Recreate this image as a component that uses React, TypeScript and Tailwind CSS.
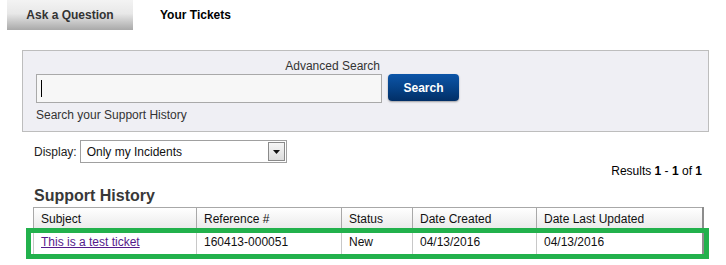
export default function App() {
  const cols = [
    { label: 'Subject', w: 'w-[163px]' },
    { label: 'Reference #', w: 'w-[145px]' },
    { label: 'Status', w: 'w-[71px]' },
    { label: 'Date Created', w: 'w-[124px]' },
    { label: 'Date Last Updated', w: 'w-[166px]' },
  ]

  return (
    <div className="relative w-[726px] h-[265px] overflow-hidden bg-white font-['Liberation_Sans',Arial,sans-serif] text-[12px] text-[#222]">
      {/* Tabs */}
      <div className="flex h-[30px] pl-[7px]">
        <div className="flex w-[126px] items-center justify-center bg-[linear-gradient(to_bottom,#f3f3f3_0%,#e8e8e8_45%,#a9a9a9_100%)] text-[12px] font-bold text-[#333]">
          Ask a Question
        </div>
        <div className="flex items-center pl-[27px] text-[12px] font-bold text-black">Your Tickets</div>
      </div>

      {/* Search panel */}
      <div className="ml-[22px] mt-[20px] h-[82px] w-[687px] border border-[#bdbdbd] bg-[#efeff4] pl-[13px] pt-[8px]">
        <div className="w-[344px] text-right leading-[14px] text-[#333]">Advanced Search</div>
        <div className="mt-[1px] flex items-start gap-[6px]">
          <div className="flex h-[29px] w-[346px] items-center border border-[#a9a9a9] bg-[#f7f7f7] pl-[4px]">
            <div className="h-[17px] w-[1px] bg-black" />
          </div>
          <button className="h-[27px] w-[71px] rounded-[4px] bg-[linear-gradient(to_bottom,#0c55a8_0%,#064389_50%,#022f66_100%)] text-[12px] font-bold text-white shadow-[0_1px_2px_rgba(0,0,0,0.35)]">
            Search
          </button>
        </div>
        <div className="mt-[5px] leading-[14px] text-[#333]">Search your Support History</div>
      </div>

      {/* Display filter */}
      <div className="mt-[8px] flex items-center pl-[34px]">
        <span className="mr-[3px] text-[#222]">Display:</span>
        <div className="flex h-[23px] w-[207px] items-center border border-[#a0a0a0] bg-white pl-[6px]">
          <span className="flex-1 text-[#111]">Only my Incidents</span>
          <div className="mr-[1px] flex h-[19px] w-[17px] items-center justify-center border border-[#8a8a8a] bg-[linear-gradient(to_bottom,#f6f6f6,#dcdcdc)]">
            <svg width="7" height="4" viewBox="0 0 7 4">
              <path d="M0 0h7L3.5 4z" fill="#111" />
            </svg>
          </div>
        </div>
      </div>

      <div className="mt-[1px] pr-[24px] text-right leading-[14px] text-black">
        Results <b>1</b> - <b>1</b> of <b>1</b>
      </div>

      <div className="mt-[9px] pl-[34px] text-[16px] font-bold leading-[18px] text-[#383838]">Support History</div>

      {/* Table */}
      <table className="ml-[33px] mt-[2px] border-collapse text-[12px]">
        <thead>
          <tr className="h-[22px] bg-[linear-gradient(to_bottom,#ffffff,#e9e9e9)]">
            {cols.map(c => (
              <th
                key={c.label}
                className={`${c.w} border border-[#a8a8a8] px-[7px] text-left font-normal text-[#111] last:border-r-2 last:border-r-[#8c8c8c]`}
              >
                {c.label}
              </th>
            ))}
          </tr>
        </thead>
        <tbody>
          <tr className="h-[25px]">
            <td className="border-x border-[#c8c8c8] px-[7px]">
              <a href="#" className="text-[#551a8b] underline">This is a test ticket</a>
            </td>
            <td className="border-x border-[#c8c8c8] px-[7px] text-[#111]">160413-000051</td>
            <td className="border-x border-[#c8c8c8] px-[7px] text-[#111]">New</td>
            <td className="border-x border-[#c8c8c8] px-[7px] text-[#111]">04/13/2016</td>
            <td className="border-l border-r-2 border-l-[#c8c8c8] border-r-[#8c8c8c] px-[7px] text-[#111]">04/13/2016</td>
          </tr>
        </tbody>
      </table>

      {/* Highlight annotation */}
      <div className="absolute left-[26px] top-[228px] h-[31px] w-[683px] border-[5px] border-[#22b14c]" />
    </div>
  )
}
